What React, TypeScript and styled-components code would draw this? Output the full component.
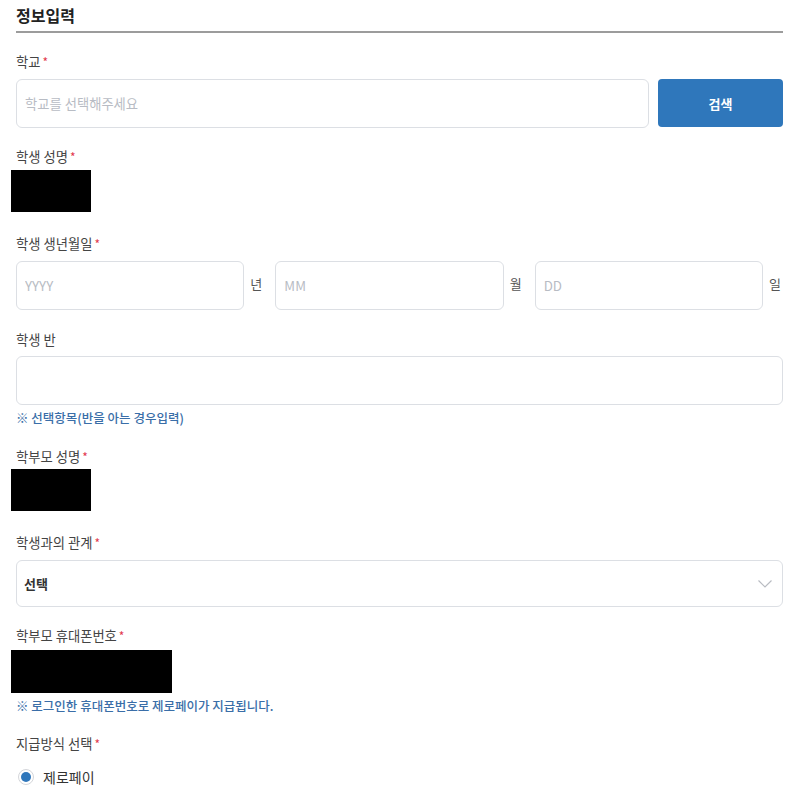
import React from 'react';
import styled, { createGlobalStyle } from 'styled-components';

const GlobalStyle = createGlobalStyle`
  body {
    margin: 0;
    background: #fff;
    font-family: 'Noto Sans CJK KR', 'Noto Sans', sans-serif;
    color: #333;
  }
`;

const Page = styled.div`
  width: 800px;
  padding: 5px 17px 0 16px;
  box-sizing: border-box;
`;

const Header = styled.h2`
  margin: 0;
  padding-bottom: 5px;
  font-size: 16px;
  line-height: 21px;
  font-weight: 700;
  color: #222;
  border-bottom: 2px solid #9c9c9c;
`;

const Field = styled.div<{ gap?: number }>`
  margin-top: ${p => p.gap ?? 19}px;
`;

const Label = styled.div`
  font-size: 13.3px;
  line-height: 20px;
  color: #444;
`;

const Star = styled.span`
  color: #e2384d;
  margin-left: 2px;
  font-size: 12px;
`;

const Row = styled.div`
  display: flex;
  align-items: center;
  margin-top: 7px;
  gap: 9px;
`;

const Input = styled.input<{ h?: number }>`
  flex: 1;
  min-width: 0;
  height: ${p => p.h ?? 49}px;
  box-sizing: border-box;
  border: 1px solid #dcdfe4;
  border-radius: 6px;
  padding: 0 8px;
  font-family: inherit;
  font-size: 13.3px;
  color: #333;
  background: #fff;
  &::placeholder {
    color: #b8bcc4;
  }
`;

const FullInput = styled(Input)`
  display: block;
  width: 100%;
  margin-top: 6px;
`;

const SearchButton = styled.button`
  width: 125px;
  height: 48px;
  margin-bottom: 1px;
  border: none;
  border-radius: 4px;
  background: #2f77bb;
  color: #fff;
  font-family: inherit;
  font-size: 13px;
  font-weight: 700;
`;

const Redacted = styled.div<{ w: number; h: number; top: number }>`
  width: ${p => p.w}px;
  height: ${p => p.h}px;
  margin: ${p => p.top}px 0 0 -5px;
  background: #000;
`;

const DateRow = styled.div`
  display: flex;
  align-items: center;
  margin-top: 7px;
`;

const Unit = styled.span<{ last?: boolean }>`
  width: 12px;
  margin: 0 ${p => (p.last ? 2 : 13)}px 0 6px;
  font-size: 13px;
  color: #555;
  text-align: center;
  padding-bottom: 4px;
`;

const Note = styled.div`
  margin-top: 4px;
  font-size: 12.5px;
  line-height: 18px;
  font-weight: 500;
  color: #3a6ea8;
`;

const Select = styled.div`
  margin-top: 7px;
  height: 47px;
  box-sizing: border-box;
  border: 1px solid #dcdfe4;
  border-radius: 6px;
  padding: 0 8px 0 7px;
  display: flex;
  align-items: center;
  justify-content: space-between;
  font-size: 13px;
  font-weight: 700;
  color: #333;
`;

const Chevron = styled.svg`
  width: 16px;
  height: 10px;
  margin-right: 1px;
`;

const RadioRow = styled.label`
  display: flex;
  align-items: center;
  gap: 9px;
  margin-top: 13px;
  font-size: 14px;
  color: #333;
`;

const RadioOuter = styled.span`
  width: 16px;
  height: 16px;
  margin-left: 2px;
  box-sizing: border-box;
  border: 1px solid #d4d6da;
  border-radius: 50%;
  display: flex;
  align-items: center;
  justify-content: center;
`;

const RadioDot = styled.span`
  width: 10px;
  height: 10px;
  border-radius: 50%;
  background: #2f77bb;
`;

const Required = () => <Star>*</Star>;

export default function App() {
  return (
    <Page>
      <GlobalStyle />
      <Header>정보입력</Header>

      <Field>
        <Label>학교<Required /></Label>
        <Row>
          <Input placeholder="학교를 선택해주세요" />
          <SearchButton>검색</SearchButton>
        </Row>
      </Field>

      <Field>
        <Label>학생 성명<Required /></Label>
        <Redacted w={80} h={42} top={3} />
      </Field>

      <Field gap={22}>
        <Label>학생 생년월일<Required /></Label>
        <DateRow>
          <Input placeholder="YYYY" />
          <Unit>년</Unit>
          <Input placeholder="MM" />
          <Unit>월</Unit>
          <Input placeholder="DD" />
          <Unit last>일</Unit>
        </DateRow>
      </Field>

      <Field gap={20}>
        <Label>학생 반</Label>
        <FullInput />
        <Note>※ 선택항목(반을 아는 경우입력)</Note>
      </Field>

      <Field gap={20}>
        <Label>학부모 성명<Required /></Label>
        <Redacted w={80} h={42} top={2} />
      </Field>

      <Field gap={22}>
        <Label>학생과의 관계<Required /></Label>
        <Select>
          <span>선택</span>
          <Chevron viewBox="0 0 16 10">
            <path d="M1.5 1.5 L8 8 L14.5 1.5" fill="none" stroke="#b9bcc2" strokeWidth="1.2" />
          </Chevron>
        </Select>
      </Field>

      <Field>
        <Label>학부모 휴대폰번호<Required /></Label>
        <Redacted w={161} h={43} top={4} />
        <Note>※ 로그인한 휴대폰번호로 제로페이가 지급됩니다.</Note>
      </Field>

      <Field>
        <Label>지급방식 선택<Required /></Label>
        <RadioRow>
          <RadioOuter><RadioDot /></RadioOuter>
          제로페이
        </RadioRow>
      </Field>
    </Page>
  );
}
